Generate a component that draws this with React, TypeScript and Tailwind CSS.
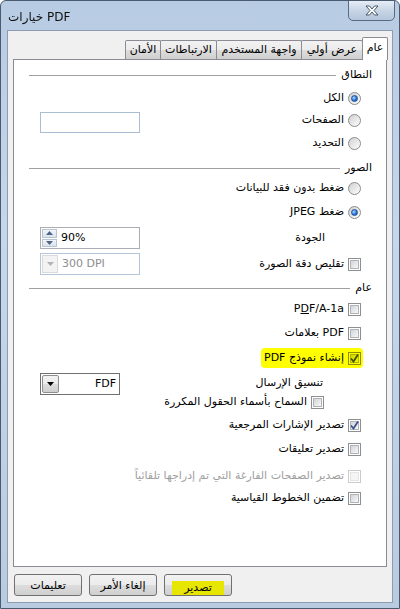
import clsx from "clsx"
import type { ReactNode } from "react"

function Radio({ on }: { on?: boolean }) {
  return (
    <span className="flex items-center justify-center w-[13px] h-[13px] shrink-0 rounded-full border border-[#8b8b8b] bg-[linear-gradient(135deg,#cfcfcf,#ffffff)]">
      {on && (
        <span className="w-[7px] h-[7px] rounded-full border border-[#1d4f99] bg-[radial-gradient(circle_at_35%_35%,#b4dbff,#2c74d8_55%,#174a9a)]" />
      )}
    </span>
  )
}

function Box({ on, off }: { on?: boolean; off?: boolean }) {
  return (
    <span
      className={clsx(
        "relative block w-[13px] h-[13px] shrink-0 border p-[1px] bg-white",
        off ? "border-[#cbcbcb]" : "border-[#8e8f8f]"
      )}
    >
      <span
        className={clsx(
          "block w-full h-full border",
          off ? "border-[#e4e4e4] bg-[#f5f5f5]" : "border-[#b0b3b8] bg-[linear-gradient(135deg,#d2d4d8,#f8f8f8)]"
        )}
      />
      {on && (
        <svg className="absolute left-0 top-0" width="11" height="11" viewBox="0 0 11 11">
          <path d="M2 5.5 L4.5 8.5 L9 1.5" fill="none" stroke="#3b4f8e" strokeWidth="1.7" />
        </svg>
      )}
    </span>
  )
}

function Opt({ ctrl, children, dim }: { ctrl: ReactNode; children: ReactNode; dim?: boolean }) {
  return (
    <div className={clsx("flex items-center gap-[4px]", dim ? "text-[#a0a0a0]" : "text-black")}>
      {ctrl}
      <span className="leading-[14px]">{children}</span>
    </div>
  )
}

function Section({ title, className }: { title: string; className?: string }) {
  return (
    <div className={clsx("flex items-center h-[16px] pr-[14px] pl-[15px] gap-[5px]", className)}>
      <span className="leading-[14px]">{title}</span>
      <span className="flex-1 h-px bg-[#a0a0a0]" />
    </div>
  )
}

export default function App() {
  const tabs = [
    { label: "عام", w: "w-[26px]", active: true },
    { label: "عرض أولي", w: "w-[62px]" },
    { label: "واجهة المستخدم", w: "w-[86px]" },
    { label: "الارتباطات", w: "w-[57px]" },
    { label: "الأمان", w: "w-[36px]" },
  ]

  return (
    <div className="w-[400px] h-[609px] flex flex-col overflow-hidden rounded-t-[6px] border border-[#4a5b70] bg-[linear-gradient(180deg,#b7cbe3_0%,#c7d7ea_40%,#b9cbe0_100%)] font-['DejaVu_Sans',sans-serif] text-[11px] text-black">
      {/* title bar */}
      <div className="h-[29px] flex items-start justify-between pl-[7px] pr-[4px] shrink-0">
        <span dir="ltr" className="mt-[9px] text-[12px] leading-[14px] text-[#111]">
          خيارات PDF
        </span>
        <div className="-mt-px w-[47px] h-[21px] rounded-b-[5px] border border-[#5a6a80] bg-[linear-gradient(180deg,#e6edf5,#c5d3e4_55%,#b4c6dc)] flex items-center justify-center">
          <svg width="14" height="11" viewBox="0 0 14 11">
            <path
              d="M1 1h3.5L7 4l2.5-3H13L9 5.5 13 10H9.5L7 7l-2.5 3H1l4-4.5z"
              fill="#ffffff"
              stroke="#4b5668"
              strokeWidth="1"
              strokeLinejoin="round"
            />
          </svg>
        </div>
      </div>

      {/* client area */}
      <div className="mx-[6px] h-[573px] flex flex-col bg-[#f0f0f0] border border-[#8c9db3]">
        {/* tabs */}
        <div dir="rtl" className="mt-[6px] h-[23px] flex items-end pr-[4px] relative z-10 -mb-px">
          {tabs.map(t =>
            t.active ? (
              <div
                key={t.label}
                className={clsx(
                  t.w,
                  "h-[23px] bg-white border border-b-0 border-[#898c95] rounded-t-[2px] flex items-center justify-center pb-[2px]"
                )}
              >
                {t.label}
              </div>
            ) : (
              <div
                key={t.label}
                className={clsx(
                  t.w,
                  "h-[19px] mb-px -mr-px border border-b-0 border-[#898c95] rounded-t-[2px] bg-[linear-gradient(180deg,#f2f2f2,#ebebeb_50%,#dddddd_51%,#cfcfcf)] flex items-center justify-center whitespace-nowrap"
                )}
              >
                {t.label}
              </div>
            )
          )}
        </div>

        {/* tab page */}
        <div dir="rtl" className="mx-[5px] h-[508px] bg-white border border-[#898c95] flex flex-col">
          <Section title="النطاق" className="mt-[7px]" />
          <div className="mt-[4px] h-[22px] flex items-center pr-[25px]">
            <Opt ctrl={<Radio on />}>الكل</Opt>
          </div>
          <div className="h-[22px] flex items-center justify-between pr-[25px] pl-[26px]">
            <Opt ctrl={<Radio />}>الصفحات</Opt>
            <div className="self-start mt-[3px] w-[100px] h-[21px] border border-[#abbdd3] bg-white" />
          </div>
          <div className="mt-px h-[22px] flex items-center pr-[25px]">
            <Opt ctrl={<Radio />}>التحديد</Opt>
          </div>

          <Section title="الصور" className="mt-[6px]" />
          <div className="mt-px h-[22px] flex items-center pr-[25px]">
            <Opt ctrl={<Radio />}>ضغط بدون فقد للبيانات</Opt>
          </div>
          <div className="mt-[2px] h-[22px] flex items-center pr-[25px]">
            <Opt ctrl={<Radio on />}>ضغط JPEG</Opt>
          </div>
          <div className="mt-[4px] h-[22px] flex items-center justify-between pr-[61px] pl-[26px]">
            <span className="leading-[14px]">الجودة</span>
            <div dir="ltr" className="w-[100px] h-[22px] border border-[#abadb3] bg-white flex items-center">
              <div className="ml-px w-[15px] h-[18px] flex flex-col gap-px">
                <div className="flex-1 border border-[#b8c4d2] bg-[linear-gradient(180deg,#f2f5f9,#dbe3ec)] flex items-center justify-center">
                  <svg width="7" height="4" viewBox="0 0 7 4"><path d="M0 4h7L3.5 0z" fill="#4e6386" /></svg>
                </div>
                <div className="flex-1 border border-[#b8c4d2] bg-[linear-gradient(180deg,#f2f5f9,#dbe3ec)] flex items-center justify-center">
                  <svg width="7" height="4" viewBox="0 0 7 4"><path d="M0 0h7L3.5 4z" fill="#4e6386" /></svg>
                </div>
              </div>
              <span className="pl-[4px] leading-[14px]">90%</span>
            </div>
          </div>
          <div className="mt-[4px] h-[22px] flex items-center justify-between pr-[25px] pl-[26px]">
            <Opt ctrl={<Box />}>تقليص دقة الصورة</Opt>
            <div dir="ltr" className="w-[100px] h-[22px] border border-[#b3c6dc] bg-white flex items-center">
              <div className="ml-px w-[16px] h-[18px] border border-[#dadada] bg-[#f3f3f3] flex items-center justify-center">
                <svg width="7" height="4" viewBox="0 0 7 4"><path d="M0 0h7L3.5 4z" fill="#b3b3b3" /></svg>
              </div>
              <span className="pl-[4px] leading-[14px] text-[#8d8d8d]">300 DPI</span>
            </div>
          </div>

          <Section title="عام" className="mt-[5px]" />
          <div className="mt-[2px] h-[22px] flex items-center pr-[25px]">
            <Opt ctrl={<Box />}>
              <span dir="ltr">
                P<span className="underline">D</span>F/A-1a
              </span>
            </Opt>
          </div>
          <div className="mt-[2px] h-[22px] flex items-center pr-[25px]">
            <Opt ctrl={<Box />}>PDF بعلامات</Opt>
          </div>
          <div className="mt-[3px] h-[22px] flex items-center pr-[25px]">
            <div className="relative">
              <Opt ctrl={<Box on />}>إنشاء نموذج PDF</Opt>
              <span className="absolute -right-[2px] -left-[3px] -top-[3px] -bottom-[3px] rounded-[4px] bg-[#ffff00] mix-blend-multiply" />
            </div>
          </div>
          <div className="mt-[4px] h-[20px] flex items-center justify-between pr-[63px] pl-[26px]">
            <span className="leading-[14px]">تنسيق الإرسال</span>
            <div dir="ltr" className="self-start w-[80px] h-[22px] border border-[#707070] bg-white flex items-center justify-between">
              <div className="ml-px w-[17px] h-[18px] border border-[#8e8f8f] rounded-[2px] bg-[linear-gradient(180deg,#f2f2f2,#ebebeb_50%,#dddddd_51%,#cfcfcf)] flex items-center justify-center">
                <svg width="7" height="4" viewBox="0 0 7 4"><path d="M0 0h7L3.5 4z" fill="#000" /></svg>
              </div>
              <span className="pr-[3px] leading-[14px]">FDF</span>
            </div>
          </div>
          <div className="h-[18px] flex items-center pr-[62px]">
            <Opt ctrl={<Box />}>السماح بأسماء الحقول المكررة</Opt>
          </div>
          <div className="mt-[3px] h-[22px] flex items-center pr-[25px]">
            <Opt ctrl={<Box on />}>تصدير الإشارات المرجعية</Opt>
          </div>
          <div className="mt-[2px] h-[22px] flex items-center pr-[25px]">
            <Opt ctrl={<Box />}>تصدير تعليقات</Opt>
          </div>
          <div className="mt-[5px] h-[22px] flex items-center pr-[25px]">
            <Opt ctrl={<Box off />} dim>
              تصدير الصفحات الفارغة التي تم إدراجها تلقائياً
            </Opt>
          </div>
          <div className="h-[22px] flex items-center pr-[25px]">
            <Opt ctrl={<Box />}>تضمين الخطوط القياسية</Opt>
          </div>
        </div>

        {/* buttons */}
        <div className="mt-[7px] ml-[6px] flex gap-[7px]">
          {["تعليمات", "إلغاء الأمر", "تصدير"].map((b, i) => (
            <button
              key={b}
              className="w-[68px] h-[22px] rounded-[3px] border border-[#707070] bg-[linear-gradient(180deg,#f2f2f2,#ebebeb_50%,#dddddd_51%,#cfcfcf)] flex items-center justify-center text-[11px]"
            >
              {i === 2 ? (
                <span className="mt-[5px] px-[12px] h-[14px] leading-[14px] bg-[#e6e600]">{b}</span>
              ) : (
                <span className="mt-[3px]">{b}</span>
              )}
            </button>
          ))}
        </div>
      </div>
    </div>
  )
}
